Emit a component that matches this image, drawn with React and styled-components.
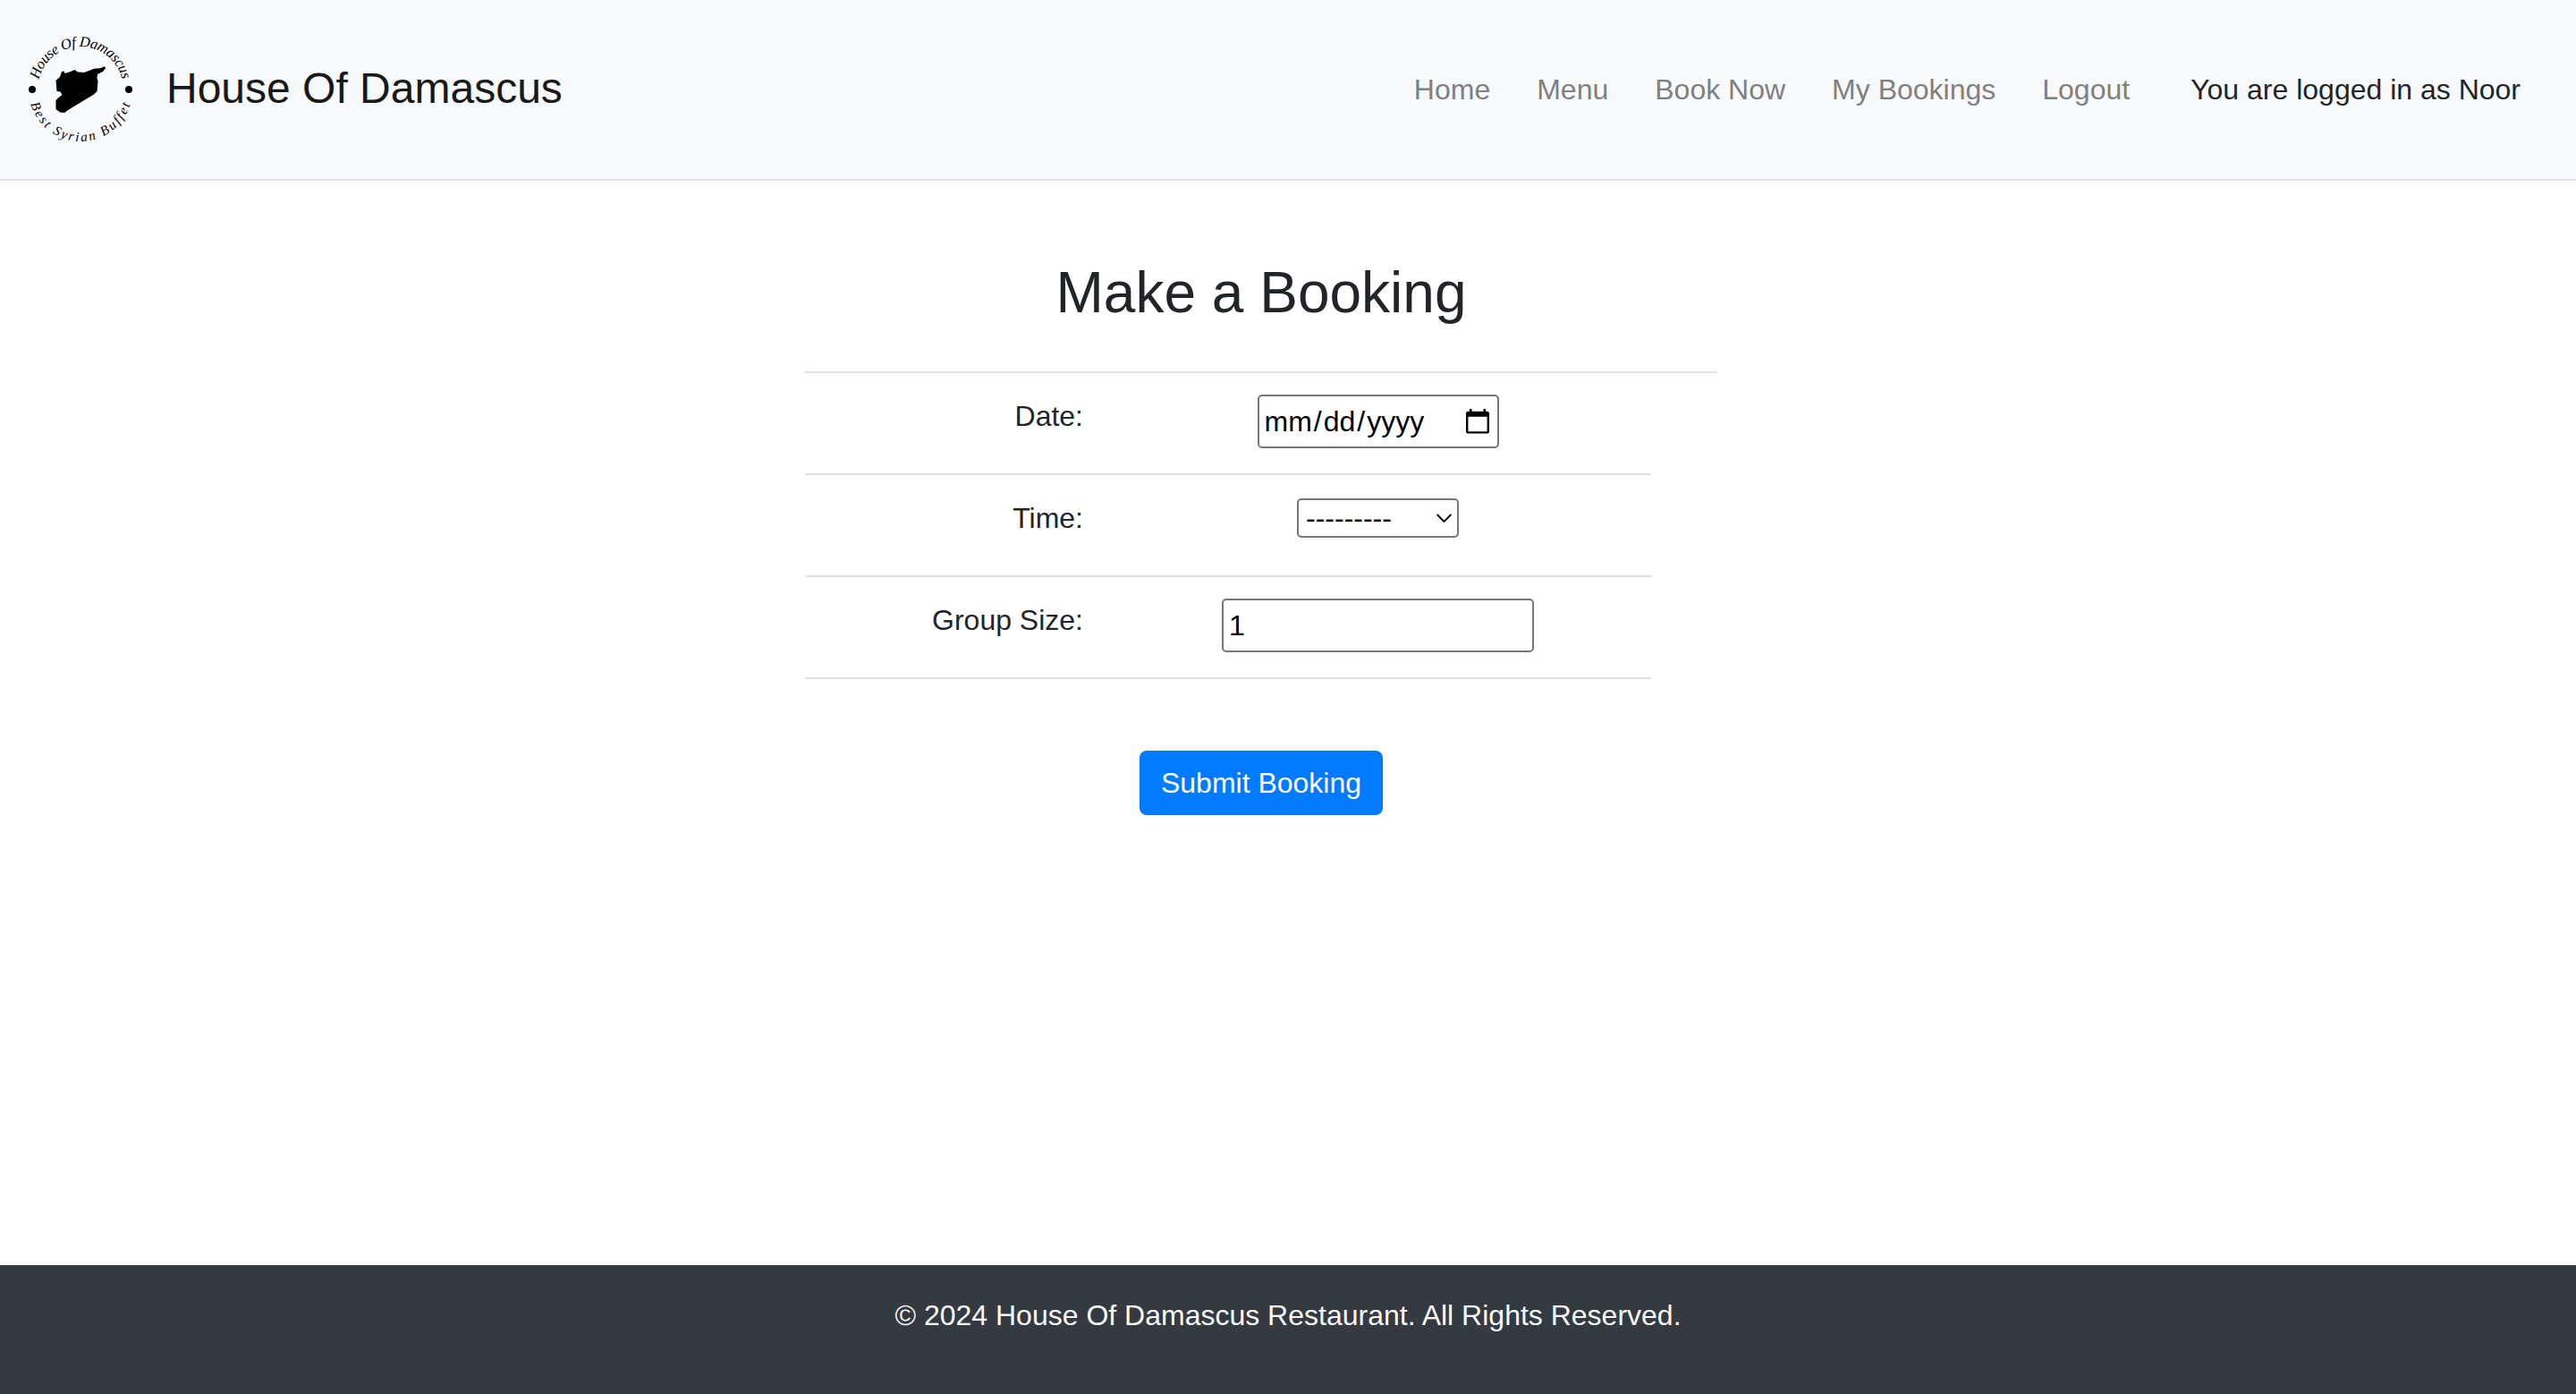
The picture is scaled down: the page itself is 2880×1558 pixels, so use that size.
import React from "react";
import styled, { createGlobalStyle } from "styled-components";

const GlobalStyle = createGlobalStyle`
  *, *::before, *::after { box-sizing: border-box; }
  body {
    margin: 0;
    background: #fff;
    color: #212529;
    font-family: "Liberation Sans", Arial, sans-serif;
    font-size: 32px;
    line-height: 48px;
  }
`;

const Page = styled.div`
  display: flex;
  flex-direction: column;
  height: 1558px;
`;

const Header = styled.header`
  display: flex;
  align-items: center;
  justify-content: space-between;
  height: 202px;
  padding: 0 62px 0 26px;
  background: #f8f9fb;
  border-bottom: 2px solid #dee2e6;
`;

const Brand = styled.a`
  display: flex;
  align-items: center;
  gap: 32px;
  color: #191919;
  font-size: 48px;
  line-height: 72px;
  text-decoration: none;
`;

const BrandName = styled.span`
  margin-top: -2px;
`;

const LogoMark = styled.svg`
  display: block;
  width: 128px;
  height: 128px;
`;

const LogoText = styled.text`
  font-family: "Liberation Serif", serif;
  font-style: italic;
  font-size: ${(p) => p.$size}px;
`;

const Nav = styled.nav`
  display: flex;
  align-items: center;
  gap: 52px;
`;

const NavLink = styled.a`
  color: #7f8080;
  text-decoration: none;
`;

const LoginStatus = styled.span`
  margin-left: 16px;
`;

const Main = styled.main`
  flex: 1;
  padding: 87px 0 0 900px;
`;

const BookingForm = styled.form`
  display: flex;
  flex-direction: column;
  width: 1020px;
`;

const Title = styled.h1`
  margin: 0;
  height: 126px;
  font-size: 64px;
  font-weight: 400;
  line-height: 77px;
  text-align: center;
`;

const Rows = styled.div`
  border-top: 2px solid #dee2e6;
`;

const Row = styled.div`
  display: grid;
  grid-template-columns: 311px 1fr;
  column-gap: 24px;
  width: 946px;
  height: 114px;
  padding-top: 24px;
  border-bottom: 2px solid #dee2e6;
`;

const Label = styled.label`
  text-align: right;
`;

const Cell = styled.div`
  display: flex;
  justify-content: center;
  align-items: flex-start;
  padding-top: ${(p) => p.$top || 0}px;
`;

const Field = styled.div`
  display: flex;
  align-items: center;
  justify-content: space-between;
  width: ${(p) => p.$width}px;
  height: ${(p) => p.$height || 60}px;
  padding: ${(p) => p.$pad || "0 6px"};
  border: 2px solid #767676;
  border-radius: 5px;
  background: #fff;
  color: #000;
  line-height: 36px;
`;

const DateText = styled.span`
  display: flex;
`;

const DatePart = styled.span`
  padding: 0 2px;
`;

const SubmitButton = styled.button`
  align-self: center;
  width: 272px;
  height: 72px;
  margin-top: 80px;
  padding: 0;
  border: 0;
  border-radius: 8px;
  background: #007bff;
  color: #fff;
  font: inherit;
`;

const Footer = styled.footer`
  height: 144px;
  padding-top: 32px;
  background: #343a40;
  color: #f8f9fa;
  text-align: center;
`;

function Logo() {
  return (
    <LogoMark viewBox="26 36 128 128" aria-label="House Of Damascus logo">
      <defs>
        <path id="arc-top" d="M 43.3 89 A 48 48 0 0 1 136.7 89" />
        <path id="arc-bottom" d="M 34.25 116 A 58 58 0 0 0 145.75 116" />
      </defs>
      <LogoText $size={16.5}>
        <textPath href="#arc-top" textLength="128">House Of Damascus</textPath>
      </LogoText>
      <LogoText $size={15}>
        <textPath href="#arc-bottom" textLength="149">Best Syrian Buffet</textPath>
      </LogoText>
      <circle cx="36" cy="100" r="4" />
      <circle cx="144" cy="100" r="4" />
      <path d="M62.5 90 L67 86 L69 80 L71.5 79.5 L72.5 82 L79 80 L83.500 78 L87 80.500 L94 81 L101 78.500 L105 76.800 L112 76.300 L117 74.300 L118.200 76 L115 80 L109 83 L108.500 87 L109.500 91 L108.500 102 L105 105.500 L76 123 L72 126 L67 125.500 L62.500 122 L62.500 112 L65 109.500 L69.500 106 L67.500 102.500 L63.500 102 Z" />
    </LogoMark>
  );
}

function CalendarIcon() {
  return (
    <svg width="26" height="28" viewBox="0 0 26 28">
      <path
        d="M4 0h2.5v2.700h13V0H22v2.700h1.500Q26 2.700 26 5.200V25q0 2.500-2.500 2.500h-21Q0 27.500 0 25V5.200Q0 2.700 2.500 2.700H4z M2.400 8.700V25.200h21.200V8.700z"
        fillRule="evenodd"
      />
    </svg>
  );
}

function ChevronIcon() {
  return (
    <svg width="17" height="11" viewBox="0 0 17 11" fill="none" stroke="#000" strokeWidth="1.8">
      <path d="M0.700 1 8.500 9 16.300 1" />
    </svg>
  );
}

const links = ["Home", "Menu", "Book Now", "My Bookings", "Logout"];

export default function App() {
  return (
    <>
      <GlobalStyle />
      <Page>
        <Header>
          <Brand>
            <Logo />
            <BrandName>House Of Damascus</BrandName>
          </Brand>
          <Nav>
            {links.map((name) => (
              <NavLink key={name}>{name}</NavLink>
            ))}
            <LoginStatus>You are logged in as Noor</LoginStatus>
          </Nav>
        </Header>
        <Main>
          <BookingForm>
            <Title>Make a Booking</Title>
            <Rows>
              <Row>
                <Label>Date:</Label>
                <Cell>
                  <Field $width={270} $pad="0 9px 0 4px">
                    <DateText>
                      <DatePart>mm</DatePart>/<DatePart>dd</DatePart>/<DatePart>yyyy</DatePart>
                    </DateText>
                    <CalendarIcon />
                  </Field>
                </Cell>
              </Row>
              <Row>
                <Label>Time:</Label>
                <Cell $top={2}>
                  <Field $width={181} $height={44} $pad="0 6px 0 8px">
                    <span>---------</span>
                    <ChevronIcon />
                  </Field>
                </Cell>
              </Row>
              <Row>
                <Label>Group Size:</Label>
                <Cell>
                  <Field $width={349}>1</Field>
                </Cell>
              </Row>
            </Rows>
            <SubmitButton type="button">Submit Booking</SubmitButton>
          </BookingForm>
        </Main>
        <Footer>© 2024 House Of Damascus Restaurant. All Rights Reserved.</Footer>
      </Page>
    </>
  );
}
